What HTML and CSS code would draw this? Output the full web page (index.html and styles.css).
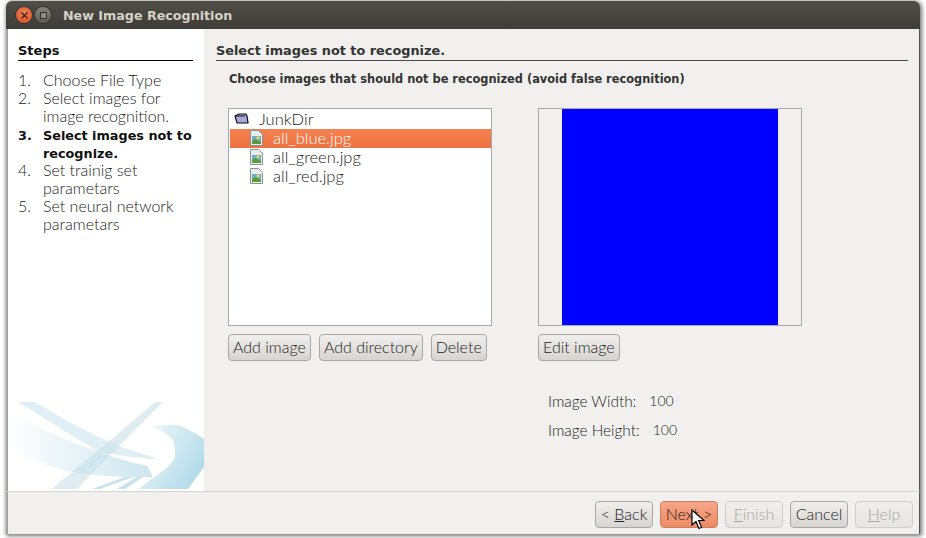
FILE: index.html
```html
<!DOCTYPE html>
<html lang="en">
<head>
    <meta charset="UTF-8">
    <title>New Image Recognition</title>
    <link rel="stylesheet" href="styles.css">
</head>
<body>
    <div class="window">
        <div class="titlebar">
            <span class="btn-close">
                <svg width="9" height="9" viewBox="0 0 9 9"><path d="M1.5 1.5l6 6M7.5 1.5l-6 6" stroke="#5a1a08" stroke-width="1.5"/></svg>
            </span>
            <span class="btn-max"><span class="btn-max-box"></span></span>
            <span class="title">New Image Recognition</span>
        </div>

        <div class="content">
            <div class="steps">
                <div class="steps-title">Steps</div>
                <ol class="steps-list">
                    <li><span class="step-no">1.</span><span>Choose File Type</span></li>
                    <li><span class="step-no">2.</span><span>Select images for image recognition.</span></li>
                    <li class="current"><span class="step-no">3.</span><span>Select images not to recognize.</span></li>
                    <li><span class="step-no">4.</span><span>Set trainig set parametars</span></li>
                    <li><span class="step-no">5.</span><span>Set neural network parametars</span></li>
                </ol>
                <svg class="steps-art" width="196" height="87" viewBox="0 0 196 87">
                    <defs>
                        <linearGradient id="sweep" x1="0" y1="0" x2="1" y2="0">
                            <stop offset="0" stop-color="#fff"/>
                            <stop offset="1" stop-color="#cde5ef"/>
                        </linearGradient>
                        <linearGradient id="swoosh" x1="0" y1="0" x2="1" y2="0.6">
                            <stop offset="0" stop-color="#f6fbfc"/>
                            <stop offset="1" stop-color="#b4dbe9"/>
                        </linearGradient>
                    </defs>
                    <path d="M0 9C30 26 60 40 92 50C110 57 125 61 139 64L145 75C125 75 105 75 85 73C55 70 25 61 0 46Z" fill="url(#sweep)"/>
                    <path d="M10 0H27C50 14 75 28 102 40C118 47 134 52 149 56L142 57C125 55 108 53 92 50C62 33 35 15 10 0Z" fill="#e0eff5"/>
                    <path d="M147 0H155C125 30 95 60 69 87H44C78 58 115 28 147 0Z" fill="#c4dfea" opacity=".55"/>
                    <path d="M144 24C152 23 160 23 169 23C178 26 188 31 196 37V65L180 87H130L145 76C155 70 168 60 167 51C167 44 165 40 165 38C160 32 152 28 144 24Z" fill="url(#swoosh)"/>
                    <path d="M144 65C152 60 160 54 167 46L167 48C160 56 154 61 148 65Z" fill="#fff"/>
                    <path d="M152 66C158 62 163 57 167 51L167 54C163 59 160 63 157 66Z" fill="#fff"/>
                    <path d="M84 87L117 75H125L92 87Z" fill="#c6e2ec"/>
                    <path d="M109 87L129 75H135L117 87Z" fill="#c6e2ec"/>
                </svg>
            </div>

            <div class="main">
                <div class="main-title">Select images not to recognize.</div>
                <div class="main-hint">Choose images that should not be recognized (avoid false recognition)</div>

                <div class="columns">
                    <div class="col">
                        <div class="tree">
                            <div class="tree-root">
                                <svg width="15" height="12" viewBox="0 0 15 12"><path d="M1 3l4-2h7l1 2 1 7H3Z" fill="#a9a9dc" stroke="#111" stroke-width="1.2"/><path d="M1 3h10" stroke="#111"/></svg>
                                <span>JunkDir</span>
                            </div>
                            <div class="tree-item selected">
                                <svg class="file-icon" width="13" height="16" viewBox="0 0 13 16"><use href="#file"/></svg>
                                <span>all_blue.jpg</span>
                            </div>
                            <div class="tree-item">
                                <svg class="file-icon" width="13" height="16" viewBox="0 0 13 16"><use href="#file"/></svg>
                                <span>all_green.jpg</span>
                            </div>
                            <div class="tree-item">
                                <svg class="file-icon" width="13" height="16" viewBox="0 0 13 16"><use href="#file"/></svg>
                                <span>all_red.jpg</span>
                            </div>
                        </div>
                        <div class="btn-row">
                            <button>Add image</button>
                            <button>Add directory</button>
                            <button>Delete</button>
                        </div>
                    </div>

                    <div class="col">
                        <div class="preview"><div class="preview-img"></div></div>
                        <div class="btn-row">
                            <button>Edit image</button>
                        </div>
                        <div class="info">
                            <div class="info-row"><span>Image Width:</span><span class="info-value">100</span></div>
                            <div class="info-row"><span>Image Height:</span><span class="info-value">100</span></div>
                        </div>
                    </div>
                </div>
            </div>
        </div>

        <div class="footer">
            <button class="nav">&lt; <u>B</u>ack</button>
            <button class="nav hover">Next &gt;</button>
            <button class="nav" disabled><u>F</u>inish</button>
            <button class="nav">Cancel</button>
            <button class="nav" disabled><u>H</u>elp</button>
            <svg class="cursor" width="14" height="21" viewBox="0 0 14 21"><path d="M1 1v15l4-3.5 3 7 2.6-1.2-3-6.8h5.4Z" fill="#fff" stroke="#000" stroke-width="1.2"/></svg>
        </div>
    </div>

    <svg width="0" height="0" class="defs">
        <symbol id="file" viewBox="0 0 13 16">
            <path d="M.5.5h8l4 4v11H.5Z" fill="#e8ecec" stroke="#8a9494"/>
            <path d="M2 6h9v8H2Z" fill="#6fb0c8"/>
            <path d="M2 11l3-2 6 3v2H2Z" fill="#5c9a3c"/>
            <circle cx="8" cy="8" r="1.4" fill="#f3e04a"/>
        </symbol>
    </svg>
</body>
</html>
```

FILE: styles.css
```css
body {
    margin: 0;
    padding: 1px 6px 4px 6px;
    height: 538px;
    box-sizing: border-box;
    background-color: #fff;
    font-family: "Lato", "Open Sans", sans-serif;
    font-size: 16px;
    color: #222;
    overflow: hidden;
}

.defs {
    position: absolute;
}

.window {
    width: 914px;
    height: 533px;
    display: flex;
    flex-direction: column;
    background-color: #f1f0ee;
    border-radius: 6px 6px 0 0;
    box-shadow: 1px 1px 4px 1px rgba(0, 0, 0, 0.55);
}

.titlebar {
    height: 28px;
    flex-shrink: 0;
    display: flex;
    align-items: center;
    padding-left: 10px;
    border-radius: 6px 6px 0 0;
    background: linear-gradient(#4f4e47, #3d3c37);
}

.btn-close {
    width: 16px;
    height: 16px;
    border-radius: 50%;
    display: flex;
    align-items: center;
    justify-content: center;
    background: radial-gradient(circle at 50% 40%, #f08a5c, #d6451c);
    box-shadow: 0 0 0 1px #33322e;
}

.btn-max {
    width: 16px;
    height: 16px;
    margin-left: 3px;
    border-radius: 50%;
    display: flex;
    align-items: center;
    justify-content: center;
    background: linear-gradient(#85847c, #5e5d56);
    box-shadow: 0 0 0 1px #33322e;
}

.btn-max-box {
    width: 5px;
    height: 5px;
    border: 1px solid #33322e;
    background-color: #8b8a82;
}

.title {
    margin-left: 12px;
    font-family: "DejaVu Sans", sans-serif;
    font-size: 12.7px;
    font-weight: bold;
    color: #d5d2c8;
}

.content {
    flex: 1;
    display: flex;
    min-height: 0;
    border-left: 2px solid #a3a3a0;
    border-right: 1px solid #555;
}

.steps {
    width: 196px;
    flex-shrink: 0;
    background-color: #fff;
    padding: 0 11px 0 10px;
    box-sizing: border-box;
    display: flex;
    flex-direction: column;
}

.steps-title {
    margin-top: 14px;
    padding-bottom: 1px;
    border-bottom: 1px solid #000;
    font-family: "DejaVu Sans", sans-serif;
    font-size: 13px;
    font-weight: bold;
    line-height: 16px;
    color: #111;
}

.steps-list {
    margin: 10px 0 0 0;
    padding: 0;
    list-style: none;
    line-height: 18px;
    font-weight: 300;
}

.steps-list li {
    display: flex;
}

.step-no {
    width: 25px;
    flex-shrink: 0;
}

.steps-list .current {
    padding-top: 2px;
    margin-bottom: -2px;
    font-family: "DejaVu Sans", sans-serif;
    font-size: 12.8px;
    font-weight: bold;
    color: #111;
}

.steps-art {
    margin: auto -11px 2px -10px;
    flex-shrink: 0;
}

.main {
    flex: 1;
    padding: 0 11px 0 12px;
}

.main-title {
    margin-top: 14px;
    padding-bottom: 1px;
    border-bottom: 1px solid #4a4a4a;
    font-family: "DejaVu Sans", sans-serif;
    font-size: 12.85px;
    font-weight: bold;
    line-height: 16px;
    color: #333;
}

.main-hint {
    margin: 10px 0 0 13px;
    font-family: "DejaVu Sans", sans-serif;
    font-size: 11.4px;
    font-weight: bold;
    line-height: 16px;
    color: #333;
}

.columns {
    display: flex;
    gap: 46px;
    margin: 21px 0 0 12px;
}

.col {
    width: 264px;
}

.tree {
    height: 218px;
    box-sizing: border-box;
    border: 1px solid #a9a9a9;
    background-color: #fff;
    font-size: 16.5px;
}

.tree-root {
    display: flex;
    align-items: center;
    height: 20px;
    margin-left: 1px;
    padding-left: 4px;
    gap: 10px;
    font-weight: 300;
}

.tree-item {
    display: flex;
    align-items: center;
    height: 19px;
    box-sizing: border-box;
    margin-left: 1px;
    padding: 0 0 2px 20px;
    gap: 10px;
    font-weight: 300;
}

.selected {
    background: linear-gradient(#f4814f, #ee7241);
    color: #fff;
}

.preview {
    height: 218px;
    box-sizing: border-box;
    border: 1px solid #a9a9a9;
    display: flex;
    justify-content: center;
}

.preview-img {
    width: 216px;
    background-color: #0000ff;
}

.btn-row {
    display: flex;
    gap: 8px;
    margin-top: 8px;
}

button {
    height: 27px;
    padding: 0 4px 2px 4px;
    border: 1px solid #a8a8a4;
    border-radius: 4px;
    background: linear-gradient(#f0efed, #d6d5d2);
    font-family: "Lato", "Open Sans", sans-serif;
    font-size: 16px;
    font-weight: 300;
    color: #222;
}

.info {
    margin-top: 26px;
    margin-left: 10px;
    font-size: 15.4px;
    font-weight: 300;
}

.info-row {
    display: flex;
    gap: 13px;
    height: 29px;
    line-height: 28px;
}

.info-value {
    font-size: 14px;
}

.footer {
    position: relative;
    height: 43px;
    flex-shrink: 0;
    box-sizing: border-box;
    border-top: 1px solid #d5d4d1;
    border-left: 2px solid #a3a3a0;
    border-right: 1px solid #555;
    display: flex;
    justify-content: flex-end;
    gap: 7px;
    padding: 9px 6px 0 0;
}

.nav {
    width: 58px;
}

.nav:disabled {
    color: #a6a6a3;
    border-color: #cfcecb;
    background: linear-gradient(#f0efed, #e6e5e3);
}

.hover {
    border-color: #c9805f;
    background: linear-gradient(#f6a588, #ee8a64);
}

.cursor {
    position: absolute;
    left: 683px;
    top: 17px;
}
```
